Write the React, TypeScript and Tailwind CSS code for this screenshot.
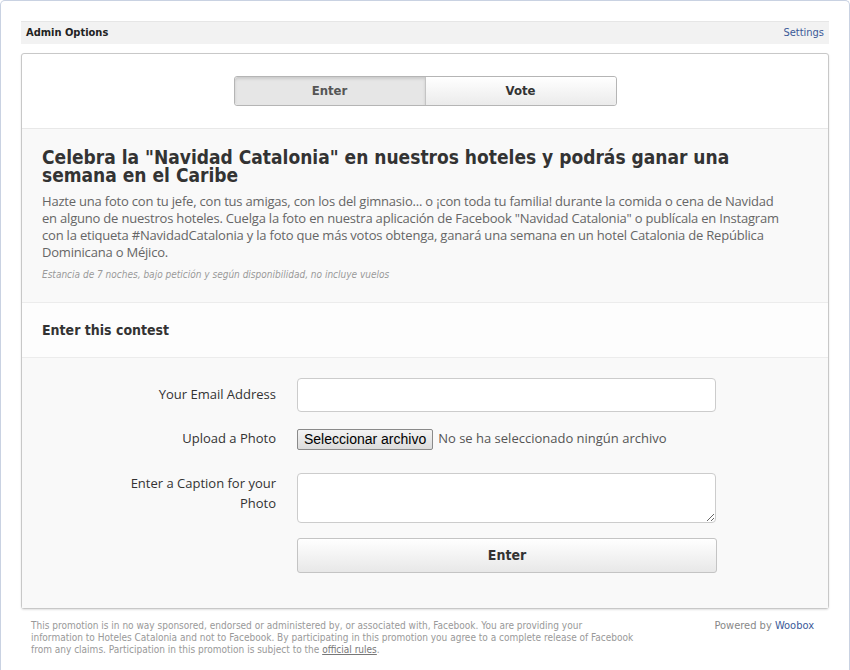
export default function App() {
  const tahoma = "font-['DejaVu_Sans_Condensed','DejaVu_Sans',sans-serif]"
  const open = "font-['Open_Sans','Liberation_Sans',sans-serif]"

  const bodyLines = [
    'Hazte una foto con tu jefe, con tus amigas, con los del gimnasio... o ¡con toda tu familia! durante la comida o cena de Navidad',
    'en alguno de nuestros hoteles. Cuelga la foto en nuestra aplicación de Facebook "Navidad Catalonia" o publícala en Instagram',
    'con la etiqueta #NavidadCatalonia y la foto que más votos obtenga, ganará una semana en un hotel Catalonia de República',
    'Dominicana o Méjico.',
  ]

  return (
    <div className="min-h-[670px] w-[850px] rounded-t-[5px] border-l border-t border-r border-[#c9d2e2] bg-white">
      <div className="px-[20px] pt-[20px]">
        {/* admin bar */}
        <div className={`flex h-[23px] items-center justify-between border-t border-[#e6e6e6] bg-[#f2f2f2] px-[5px] text-[11px] ${tahoma}`}>
          <span className="font-bold text-[#222]">Admin Options</span>
          <a className="text-[#3b5998]">Settings</a>
        </div>

        {/* main card */}
        <div className="mt-[9px] rounded-[3px] border border-[#c8c8c8] bg-white shadow-[0_1px_2px_rgba(0,0,0,0.12)]">
          <div className="flex justify-center py-[22px]">
            <div className={`flex h-[30px] w-[383px] rounded-[3px] border border-[#b5b5b5] text-[13px] font-bold ${tahoma}`}>
              <button className="flex-1 rounded-l-[3px] bg-[#e6e6e6] text-[#555] shadow-[inset_0_2px_3px_rgba(0,0,0,0.12)]">
                Enter
              </button>
              <button className="flex-1 rounded-r-[3px] border-l border-[#c4c4c4] bg-gradient-to-b from-white to-[#ebebeb] text-[#333]">
                Vote
              </button>
            </div>
          </div>

          <div className="border-t border-[#e8e8e8] bg-[#f9f9f9] px-[20px] pt-[19px] pb-[21px]">
            <h1 className={`text-[19px] font-bold leading-[18px] text-[#333] ${tahoma}`}>
              Celebra la "Navidad Catalonia" en nuestros hoteles y podrás ganar una semana en el Caribe
            </h1>
            <p className={`mt-[9px] text-[13px] leading-[17px] tracking-[-0.2px] text-[#666] ${open}`}>
              {bodyLines.map((line) => (
                <span key={line} className="block whitespace-nowrap">
                  {line}
                </span>
              ))}
            </p>
            <p className={`mt-[7px] text-[10px] italic leading-[13px] text-[#999] ${tahoma}`}>
              Estancia de 7 noches, bajo petición y según disponibilidad, no incluye vuelos
            </p>
          </div>

          <div className="border-t border-[#ececec] bg-[#fdfdfd] px-[20px] py-[18px]">
            <h2 className={`text-[14px] font-bold leading-[18px] text-[#333] ${tahoma}`}>Enter this contest</h2>
          </div>

          <div className={`border-t border-[#ececec] bg-[#f9f9f9] pt-[20px] pb-[35px] text-[13px] text-[#333] ${open}`}>
            <div className="flex items-center">
              <label className="w-[254px] text-right">Your Email Address</label>
              <input type="text" className="ml-[21px] h-[34px] w-[419px] rounded-[4px] border border-[#ccc] bg-white" />
            </div>
            <div className="mt-[10px] flex h-[34px] items-center">
              <label className="w-[254px] text-right">Upload a Photo</label>
              <div className="ml-[21px] flex items-center">
                <span className="h-[21px] rounded-[2px] border border-[#8a8a8a] bg-gradient-to-b from-[#f4f4f4] to-[#dcdcdc] px-[6px] font-['Liberation_Sans',sans-serif] text-[14px] leading-[19px] text-black">
                  Seleccionar archivo
                </span>
                <span className="ml-[5px] text-[#555]">No se ha seleccionado ningún archivo</span>
              </div>
            </div>
            <div className="mt-[17px] flex items-start">
              <label className="w-[254px] pl-[94px] text-right leading-[20px]">Enter a Caption for your Photo</label>
              <textarea className="ml-[21px] h-[50px] w-[419px] rounded-[4px] border border-[#ccc] bg-white" />
            </div>
            <div className="mt-[15px] flex">
              <div className="w-[254px]" />
              <button className={`ml-[21px] h-[35px] w-[420px] rounded-[3px] border border-[#c4c4c4] bg-gradient-to-b from-white to-[#e8e8e8] text-[14px] font-bold text-[#333] ${tahoma}`}>
                Enter
              </button>
            </div>
          </div>
        </div>

        {/* footer */}
        <div className={`flex justify-between pt-[11px] pl-[10px] pr-[15px] text-[10px] leading-[12px] text-[#999] ${tahoma}`}>
          <div className="w-[620px]">
            <p className="whitespace-nowrap">
              This promotion is in no way sponsored, endorsed or administered by, or associated with, Facebook. You are providing your
            </p>
            <p className="whitespace-nowrap">
              information to Hoteles Catalonia and not to Facebook. By participating in this promotion you agree to a complete release of Facebook
            </p>
            <p className="whitespace-nowrap">
              from any claims. Participation in this promotion is subject to the{' '}
              <span className="text-[#777] underline">official rules</span>.
            </p>
          </div>
          <p className="text-[11px] text-[#888]">
            Powered by <span className="text-[#3b5998]">Woobox</span>
          </p>
        </div>
      </div>
    </div>
  )
}
